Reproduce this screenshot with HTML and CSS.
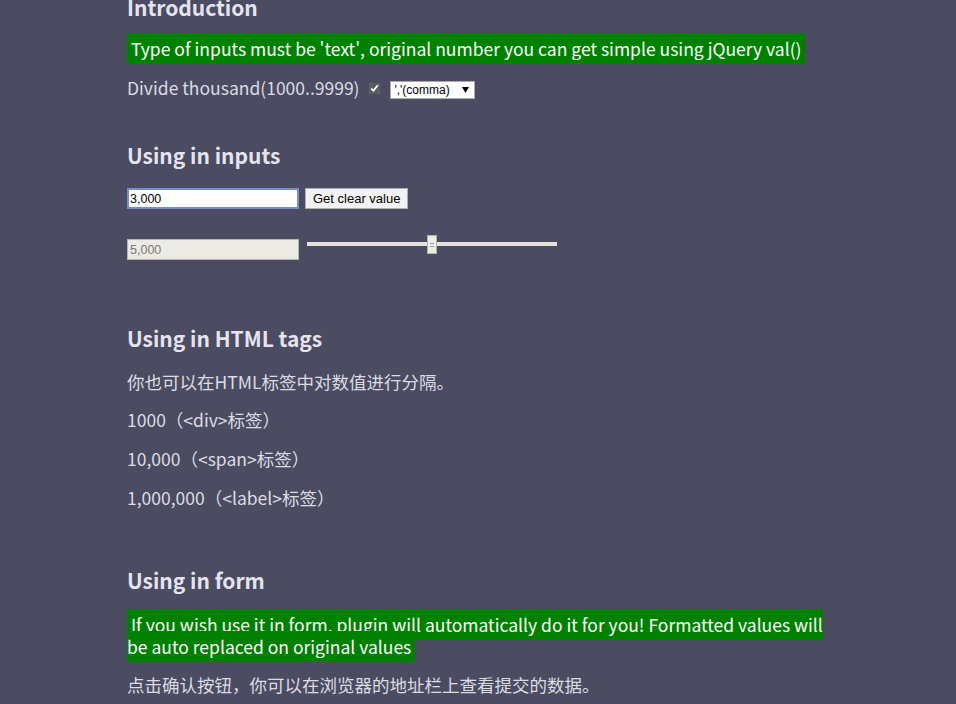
FILE: index.html
```html
<!DOCTYPE html>
<html lang="zh-CN">
<head>
    <meta charset="UTF-8">
    <title>Divide numbers demo</title>
    <link rel="stylesheet" href="styles.css">
</head>
<body>
    <div class="page">
        <h2>Introduction</h2>
        <p class="note"><span class="hl">&nbsp;Type of inputs must be 'text', original number you can get simple using jQuery val()&nbsp;</span></p>
        <p class="options">
            Divide thousand(1000..9999)
            <input type="checkbox" class="check" checked>
            <select class="sep">
                <option>','(comma)</option>
                <option>' '(space)</option>
            </select>
        </p>

        <h2 class="inputs-title">Using in inputs</h2>
        <div class="row">
            <input type="text" class="field focus" value="3,000">
            <button class="btn">Get clear value</button>
        </div>
        <div class="row row-range">
            <input type="text" class="field" value="5,000" disabled>
            <input type="range" class="range" min="0" max="10000" value="5000">
        </div>

        <h2 class="spaced">Using in HTML tags</h2>
        <p>你也可以在HTML标签中对数值进行分隔。</p>
        <div class="line">1000（&lt;div&gt;标签）</div>
        <div class="line">10,000（&lt;span&gt;标签）</div>
        <div class="line">1,000,000（&lt;label&gt;标签）</div>

        <h2 class="spaced form-title">Using in form</h2>
        <p class="note note-wrap"><span class="hl">&nbsp;If you wish use it in form, plugin will automatically do it for you! Formatted values will be auto replaced on original values&nbsp;</span></p>
        <p>点击确认按钮，你可以在浏览器的地址栏上查看提交的数据。</p>
    </div>
</body>
</html>
```

FILE: styles.css
```css
body {
    margin: 0;
    background-color: #4b4b61;
    color: #dcdce4;
    font-family: "Noto Sans CJK SC", "Noto Sans", sans-serif;
    font-size: 17.5px;
}
.page {
    width: 700px;
    padding-left: 127px;
    margin-top: -7px;
}
h2 {
    font-size: 21px;
    font-weight: bold;
    color: #e4e4f0;
    margin: 0 0 14px 0;
    line-height: 28px;
}
h2.inputs-title {
    margin-top: 2px;
    margin-bottom: 19px;
}
h2.spaced {
    margin-top: 64px;
    margin-bottom: 17px;
}
h2.form-title {
    margin-top: 55px;
    margin-bottom: 20px;
}
p {
    margin: 0 0 12px 0;
    line-height: 26px;
}
.note {
    line-height: 28px;
}
.note-wrap {
    line-height: 22px;
    margin-bottom: 14px;
}
.hl {
    background-color: #008000;
    color: #fff;
    padding: 3px 0;
}
.options {
    margin-bottom: 40px;
}
.check {
    width: 11px;
    height: 11px;
    margin: 0 6px 0 6px;
    vertical-align: 1px;
    accent-color: #5c5c5c;
}
.sep {
    appearance: none;
    -webkit-appearance: none;
    font-family: Arial, "Liberation Sans", sans-serif;
    font-size: 12px;
    height: 18px;
    width: 85px;
    padding: 0 0 0 3px;
    border: 1px solid #aaa;
    border-radius: 0;
    color: #000;
    background: #fff url("data:image/svg+xml,%3Csvg xmlns='http://www.w3.org/2000/svg' width='7' height='6'%3E%3Cpath d='M0 0h7L3.5 6z' fill='%23000'/%3E%3C/svg%3E") no-repeat right 5px center;
    vertical-align: middle;
}
.row {
    display: flex;
    align-items: center;
    gap: 6px;
    margin-bottom: 30px;
}
.field {
    width: 172px;
    height: 21px;
    box-sizing: border-box;
    border: 1px solid #b6b6b6;
    padding: 0 2px;
    font-family: Arial, "Liberation Sans", sans-serif;
    font-size: 12.5px;
    color: #000;
    background: #fff;
}
.field.focus {
    border: 2px solid #7390c8;
    padding: 0 1px;
}
.field:disabled {
    background: #ebebe4;
    color: #777;
}
.btn {
    height: 21px;
    padding: 0 7px;
    font-family: Arial, "Liberation Sans", sans-serif;
    font-size: 13px;
    background: #f2f2f2;
    border: 1px solid #adadad;
    color: #000;
}
.row-range {
    align-items: flex-start;
    margin-bottom: 0;
}
.range {
    -webkit-appearance: none;
    appearance: none;
    width: 250px;
    height: 4px;
    margin: 3px 0 0 2px;
    background: #e4e4dc;
}
.range::-webkit-slider-thumb {
    -webkit-appearance: none;
    width: 10px;
    height: 19px;
    background: #ecece6 linear-gradient(#ecece6 7px, #999 7px, #999 8px, #ecece6 8px, #ecece6 10px, #999 10px, #999 11px, #ecece6 11px);
    background-size: 4px 100%;
    background-repeat: no-repeat;
    background-position: center;
    border: 1px solid #b0b0a8;
}
.line {
    line-height: 26px;
    margin-bottom: 13px;
}
```
